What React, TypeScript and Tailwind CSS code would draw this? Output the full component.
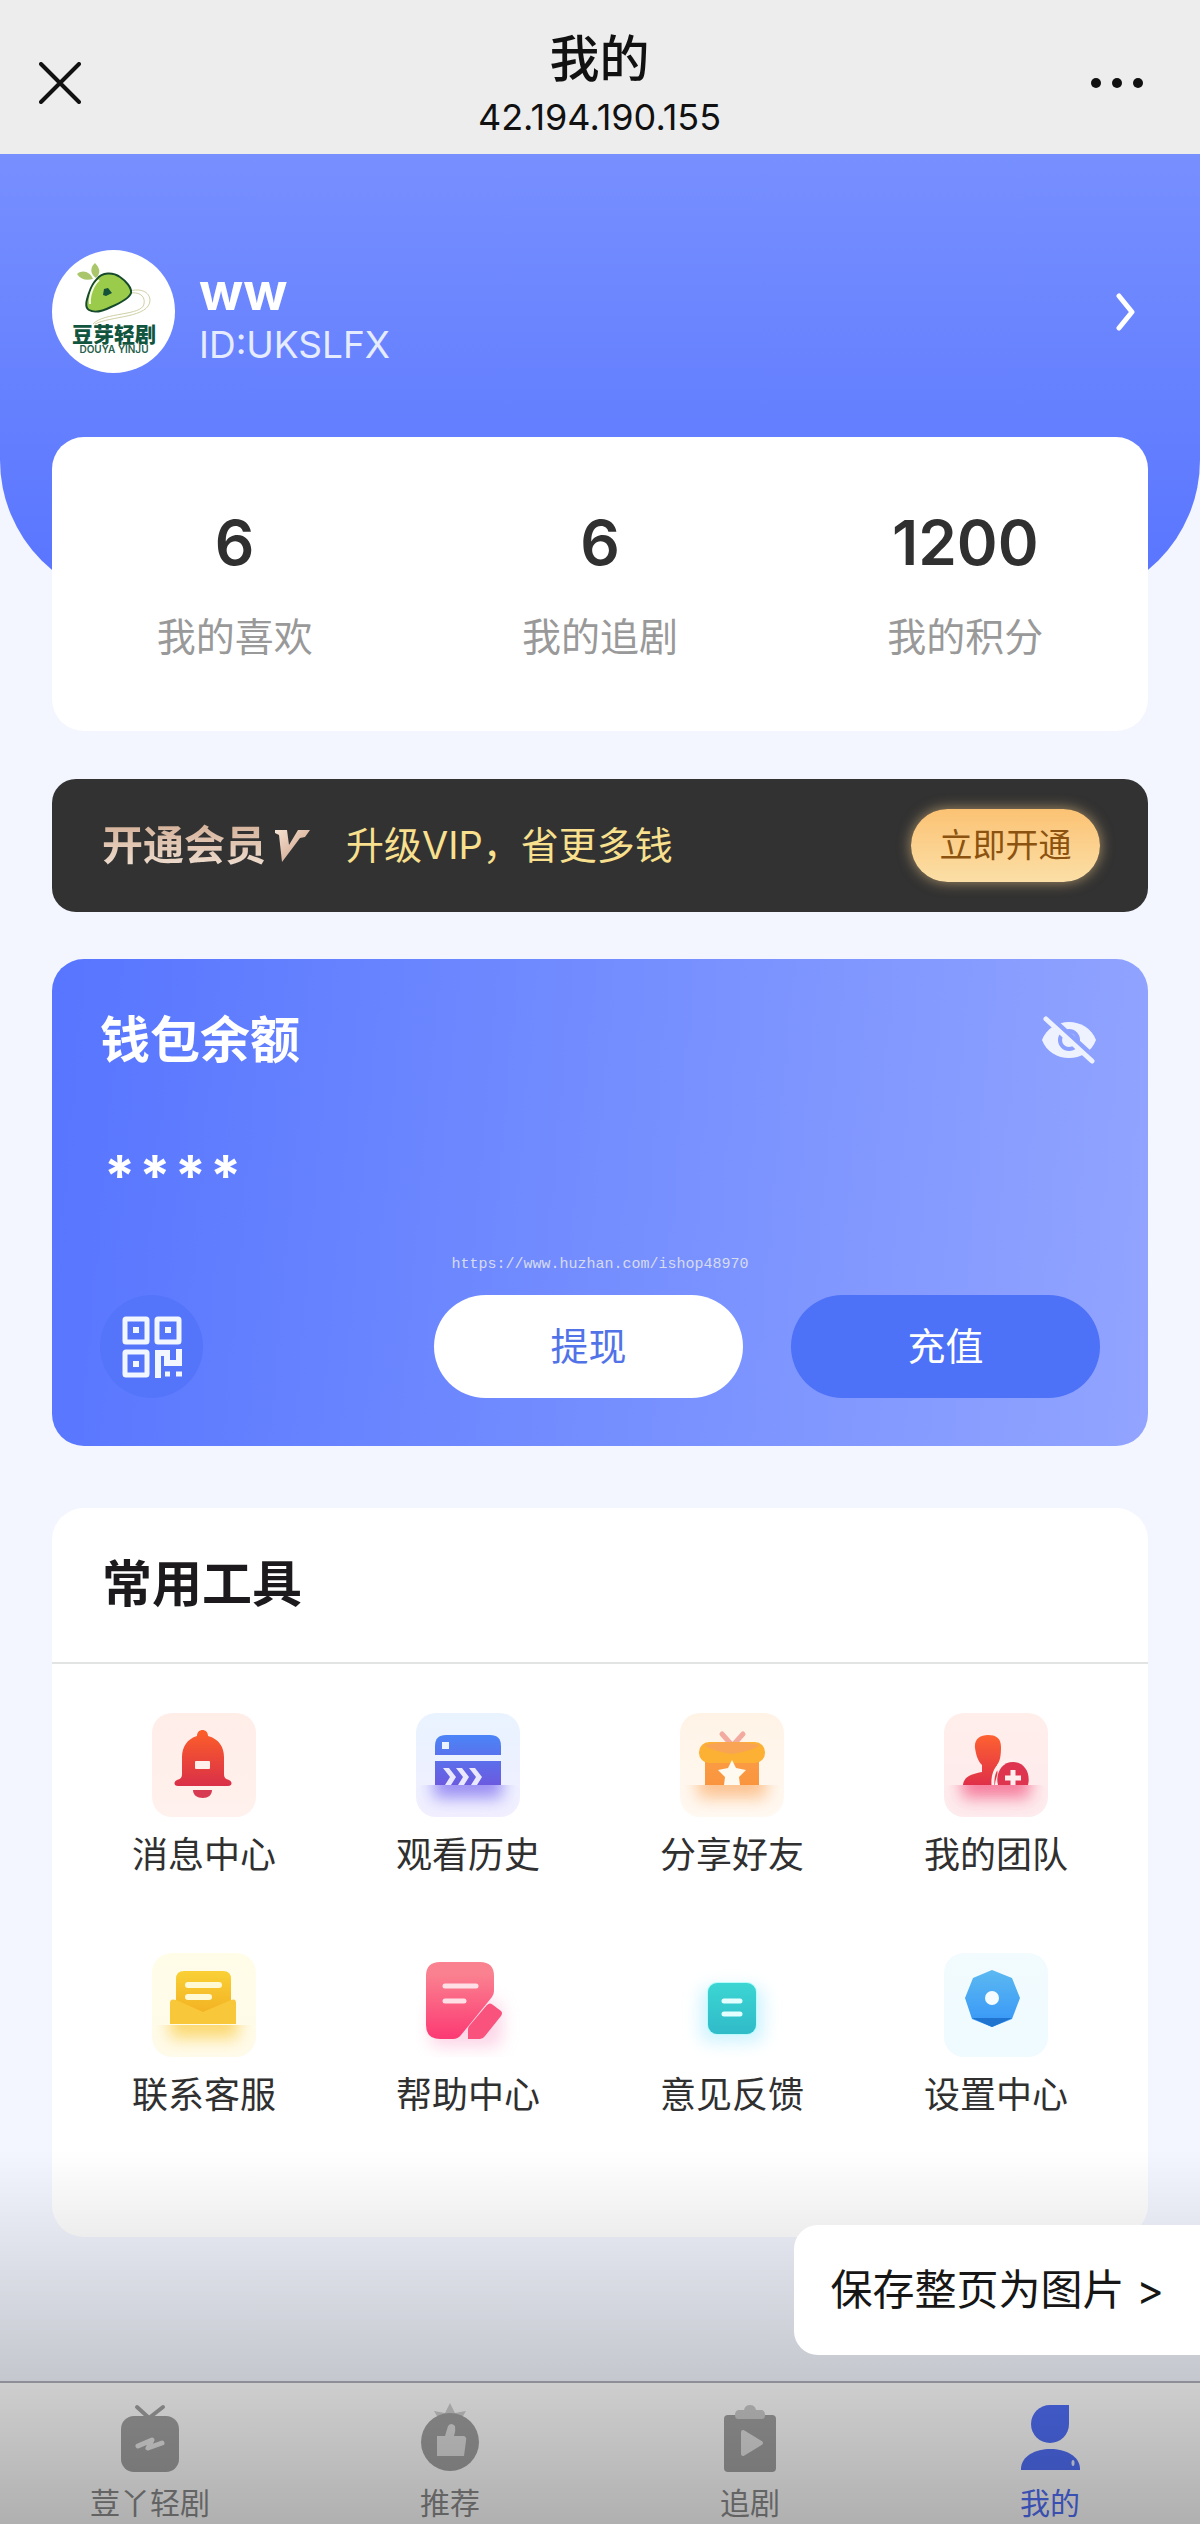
import type { ReactNode } from "react";

const stats = [
  { value: "6", label: "我的喜欢" },
  { value: "6", label: "我的追剧" },
  { value: "1200", label: "我的积分" },
];

function AvatarLogo() {
  return (
    <svg viewBox="0 0 123 123" className="w-[123px] h-[123px] shrink-0" aria-hidden="true">
      <circle cx="61.5" cy="61.5" r="61.5" fill="#fff" />
      <path d="M41 74C52 62 90 66 92 54C94 44 84 42 79 43M43 74C58 66 98 68 98 50C97 39 84 39 78 41" fill="none" stroke="#cfd0a4" />
      <path d="M25 24C31 19 38 22 41 29C34 31 28 29 25 24Z" fill="#a9c76a" />
      <path d="M43 13C37 18 39 25 44 28C49 23 48 18 43 13Z" fill="#a9c76a" />
      <path
        d="M45 29C50 22 61 22 68 27C74 31 80 38 79 43C77 49 66 54 59 57C51 61 42 63 37 60C32 57 35 49 37 43C39 37 41 33 45 29Z"
        fill="#9bcb4a"
        stroke="#164a2c"
        strokeWidth="2"
      />
      <path d="M38 54C37 46 41 35 47 30" fill="none" stroke="#f4fbe8" strokeWidth="2" />
      <path d="M52 39L56 38L60 43L54 46L51 45Z" fill="#14523a" />
      <text x="62" y="92" textAnchor="middle" fontSize="21" fontWeight="900" fill="#12553f">
        豆芽轻剧
      </text>
      <text x="62" y="103" textAnchor="middle" fontSize="10" fontWeight="600" fill="#25604c">
        DOUYA YINJU
      </text>
    </svg>
  );
}

function VipMark() {
  return (
    <svg viewBox="0 0 36 34" className="w-9 h-[34px] ml-2" aria-hidden="true">
      <defs>
        <linearGradient id="vip" x1="0" y1="0" x2="1" y2="1">
          <stop offset="0" stopColor="#f7e3d3" />
          <stop offset="1" stopColor="#c99a80" />
        </linearGradient>
      </defs>
      <path d="M1 1H13L15 16L24 1H36L31 8L26 9L8 33L5 6L1 4Z" fill="url(#vip)" />
    </svg>
  );
}

function EyeOffIcon() {
  return (
    <svg viewBox="0 0 54 48" className="w-[54px] h-12" aria-hidden="true">
      <defs>
        <mask id="eye">
          <rect width="54" height="48" fill="#fff" />
          <circle cx="27" cy="24" r="11" fill="#000" />
          <circle cx="27" cy="24" r="7" fill="#fff" />
          <path d="M6 -1L54 43" stroke="#000" strokeWidth="5" />
        </mask>
      </defs>
      <path d="M0 24C9 0 45 0 54 24C45 48 9 48 0 24Z" fill="#eef2ff" mask="url(#eye)" />
      <path d="M4 3L50 45" stroke="#eef2ff" strokeWidth="5" strokeLinecap="round" />
    </svg>
  );
}

function QrIcon() {
  return (
    <svg viewBox="0 0 60 62" className="w-[60px] h-[62px]" fill="none" stroke="#f2f6ff" strokeWidth="5" aria-hidden="true">
      <rect x="3" y="3" width="22" height="23" rx="1" />
      <rect x="35" y="3" width="22" height="23" rx="1" />
      <rect x="3" y="36" width="22" height="23" rx="1" />
      <path d="M11 14H17M43 14H49M11 48H17" strokeWidth="6" />
      <path d="M36 62V37H45V47H57V33" strokeWidth="6" />
      <path d="M43 58H48M54 58H60" />
    </svg>
  );
}

function ToolFrame({ id, from, to, glow, bg, children }: { id: string; from: string; to: string; glow?: string; bg?: [string, string]; children: ReactNode }) {
  return (
    <svg viewBox="0 0 104 104" className="w-[104px] h-[104px]" aria-hidden="true">
      <defs>
        <linearGradient id={`${id}-fill`} gradientUnits="userSpaceOnUse" x1="0" y1="20" x2="0" y2="84">
          <stop offset="0" stopColor={from} />
          <stop offset="1" stopColor={to} />
        </linearGradient>
        {bg && (
          <linearGradient id={`${id}-bg`} x1="0" y1="0" x2="0" y2="1">
            <stop offset="0" stopColor={bg[0]} />
            <stop offset="1" stopColor={bg[1]} />
          </linearGradient>
        )}
        <filter id={`${id}-blur`} x="-50%" y="-80%" width="200%" height="260%">
          <feGaussianBlur stdDeviation="8" />
        </filter>
        <clipPath id={`${id}-clip`}>
          <rect y="72" width="104" height="32" rx="6" />
        </clipPath>
      </defs>
      {bg && <rect width="104" height="104" rx="20" fill={`url(#${id}-bg)`} />}
      {glow && (
        <g clipPath={`url(#${id}-clip)`}>
          <rect x="18" y="56" width="68" height="29" fill={glow} opacity="0.7" filter={`url(#${id}-blur)`} />
        </g>
      )}
      {children}
    </svg>
  );
}

const tools = [
  {
    label: "消息中心",
    icon: (
      <ToolFrame id="bell" from="#fb5d2a" to="#d3264f" bg={["#ffede8", "#fff1ed"]}>
        <path
          d="M45 23C45 15 56 15 56 23C67 26 72 34 72 44V61C72 65 74 66 77 67C81 69 80 73 76 73H26C22 73 21 69 25 67C28 66 30 65 30 61V44C30 34 35 26 45 23Z"
          fill="url(#bell-fill)"
        />
        <path d="M41 77H60C60 82 56 85 51 85C45 85 41 82 41 77Z" fill="#d83a52" />
        <rect x="43" y="48" width="15" height="8" rx="1" fill="#fff0ec" />
      </ToolFrame>
    ),
  },
  {
    label: "观看历史",
    icon: (
      <ToolFrame id="history" from="#4a86f8" to="#7350da" glow="#7867ee" bg={["#e9f3ff", "#f1efff"]}>
        <path d="M19 42V33Q19 22 30 22H74Q85 22 85 33V42Z" fill="url(#history-fill)" />
        <rect x="19" y="48" width="66" height="24" fill="url(#history-fill)" />
        <rect x="26" y="29" width="7" height="7" fill="#eaf1ff" />
        <path d="M27 55H33L40 64L35 72H29L34 64ZM40 55H46L53 64L48 72H42L47 64ZM53 55H59L66 64L61 72H55L60 64Z" fill="#e9e8ff" />
      </ToolFrame>
    ),
  },
  {
    label: "分享好友",
    icon: (
      <ToolFrame id="gift" from="#fba44c" to="#f9913a" glow="#fbae6a" bg={["#fff3e6", "#fff9f2"]}>
        <path d="M42 21L51 31M63 21L54 31" stroke="#f3aa9f" strokeWidth="5" strokeLinecap="round" />
        <rect x="25" y="46" width="54" height="26" fill="url(#gift-fill)" />
        <rect x="19" y="29" width="66" height="21" rx="10" fill="#fcb034" />
        <path d="M24 32Q52 26 80 32Q72 38 52 41Q32 38 24 32Z" fill="#f7a063" opacity="0.7" />
        <path d="M52 47L56 55L66 57L59 64L60 72H44L45 64L38 57L48 55Z" fill="#fffaf0" />
      </ToolFrame>
    ),
  },
  {
    label: "我的团队",
    icon: (
      <ToolFrame id="team" from="#ff6430" to="#d8234e" glow="#f2507c" bg={["#ffeeea", "#fdebee"]}>
        <path
          d="M31 35C30 26 36 22 44 22C52 22 57 25 57 34C57 43 56 48 53 52V57C55 60 51 66 51 72H19C20 63 28 61 38 59V52C34 48 32 42 31 35Z"
          fill="url(#team-fill)"
        />
        <path d="M49 72C48 58 55 47 69 47" fill="none" stroke="#fff0ee" strokeWidth="3" />
        <path d="M54 72C51 60 58 49 69 49C80 49 87 60 84 72Z" fill="#de3450" />
        <path d="M69 57V72M61 65H77" stroke="#ffeef0" strokeWidth="5" />
      </ToolFrame>
    ),
  },
  {
    label: "联系客服",
    icon: (
      <ToolFrame id="mail" from="#f9cf35" to="#f0a018" glow="#f9c93c" bg={["#fffce8", "#fffbea"]}>
        <path d="M24 66V26Q24 18 32 18H71Q79 18 79 26V66Z" fill="url(#mail-fill)" />
        <path d="M18 71V50Q18 45 24 47L51 59L79 47Q84 45 84 50V71Z" fill="#f9c83a" />
        <path d="M36 32H67M36 44H57" stroke="#fff9d6" strokeWidth="6" strokeLinecap="round" />
      </ToolFrame>
    ),
  },
  {
    label: "帮助中心",
    icon: (
      <ToolFrame id="help" from="#fa8290" to="#fc3b74">
        <rect x="14" y="48" width="72" height="46" rx="10" fill="#fbc4dd" opacity="0.7" filter="url(#help-blur)" />
        <path d="M24 9H64Q78 9 78 23V38Q78 41 76 44L45 82Q42 86 37 86H24Q10 86 10 72V23Q10 9 24 9Z" fill="url(#help-fill)" />
        <path d="M71 52Q74 49 77 52L85 58Q87 60 85 63L69 83Q67 86 64 86H52V76Q52 74 54 72Z" fill="#f9527d" />
        <path d="M29 33H60M29 48H48" stroke="#ffdfe6" strokeWidth="5" strokeLinecap="round" />
      </ToolFrame>
    ),
  },
  {
    label: "意见反馈",
    icon: (
      <ToolFrame id="feedback" from="#3edbd5" to="#2fb9c8">
        <rect x="20" y="34" width="64" height="56" rx="10" fill="#bdefff" opacity="0.7" filter="url(#feedback-blur)" />
        <rect x="27" y="29" width="50" height="53" rx="10" fill="#b9fbfb" />
        <rect x="28" y="30" width="48" height="51" rx="9" fill="url(#feedback-fill)" />
        <path d="M44 48H60M44 61H60" stroke="#e4ffff" strokeWidth="5" strokeLinecap="round" />
      </ToolFrame>
    ),
  },
  {
    label: "设置中心",
    icon: (
      <ToolFrame id="settings" from="#5ab7f2" to="#2f8ff8" bg={["#f2fbfe", "#effbff"]}>
        <path d="M48 17L68 25L76 45L68 66L48 74L28 66L21 45L29 25Z" fill="url(#settings-fill)" />
        <path d="M28 65H68L48 74Z" fill="#1e74cf" />
        <circle cx="48" cy="45" r="7" fill="#f4fcff" />
      </ToolFrame>
    ),
  },
];

const tabs = [
  {
    label: "荳丫轻剧",
    active: false,
    icon: (
      <>
        <path d="M17 4L29 15L43 4" fill="none" stroke="currentColor" strokeWidth="4" strokeLinecap="round" />
        <rect x="1" y="13" width="58" height="56" rx="13" fill="currentColor" />
        <path d="M18 43L32 37L28 45L42 40" fill="none" stroke="#e8e8e8" strokeWidth="5" strokeLinecap="round" strokeLinejoin="round" />
      </>
    ),
  },
  {
    label: "推荐",
    active: false,
    icon: (
      <>
        <path d="M14 8L25 10L30 0L35 10L46 8L40 18H20Z" fill="#d0d0d0" />
        <circle cx="30" cy="39" r="29" fill="currentColor" />
        <path d="M17 33H25L28 23Q31 19 35 23Q36 28 34 33H44Q47 34 46 38L44 53H17Z" fill="#e0e0e0" />
      </>
    ),
  },
  {
    label: "追剧",
    active: false,
    icon: (
      <>
        <rect x="4" y="12" width="52" height="57" rx="4" fill="currentColor" />
        <path d="M18 7H24Q25 2 30 2Q35 2 36 7H42Q45 8 45 12Q45 16 42 16H18Q15 16 15 12Q15 8 18 7Z" fill="#cdcdcd" />
        <path d="M23 29L41 40L23 51Z" fill="#e2e2e2" stroke="#e2e2e2" strokeWidth="4" strokeLinejoin="round" />
      </>
    ),
  },
  {
    label: "我的",
    active: true,
    icon: (
      <>
        <path d="M30 2H49V21A19 19 0 1 1 30 2Z" fill="currentColor" />
        <path d="M1 67C0 39 61 39 60 67Z" fill="currentColor" />
        <ellipse cx="53" cy="60" rx="1.5" ry="3" fill="#e7edff" />
      </>
    ),
  },
];

export default function App() {
  return (
    <div className="relative flex min-h-screen flex-col bg-[#f3f6ff] font-['Inter','Noto_Sans_CJK_SC',sans-serif] text-[#303030]">
      <header className="grid h-[154px] grid-cols-[1fr_auto_1fr] items-center bg-[#ededed] pr-14 pl-[39px] text-[#111]">
        <button type="button" aria-label="关闭" className="justify-self-start pt-3">
          <svg viewBox="0 0 42 42" className="h-[42px] w-[42px]" stroke="currentColor" strokeWidth="4" strokeLinecap="round">
            <path d="M2 2L40 40M40 2L2 40" />
          </svg>
        </button>
        <div className="pt-4 pl-4 text-center">
          <h1 className="text-[50px] leading-[64px] font-medium">我的</h1>
          <p className="text-[36px] leading-[52px]">42.194.190.155</p>
        </div>
        <button type="button" aria-label="更多" className="justify-self-end pt-3">
          <svg viewBox="0 0 54 12" className="h-3 w-[54px]" fill="currentColor">
            <circle cx="6" cy="6" r="5" />
            <circle cx="27" cy="6" r="5" />
            <circle cx="48" cy="6" r="5" />
          </svg>
        </button>
      </header>

      <section className="rounded-b-[142px] bg-linear-to-b from-[#778fff] to-[#5874ff] px-[52px] pt-24 pb-[229px] text-white">
        <a href="#profile" className="flex items-center">
          <AvatarLogo />
          <div className="ml-6 flex-1 pt-2">
            <p className="text-[52px] leading-[58px] font-bold">ww</p>
            <p className="text-[37px] leading-[48px] text-[#e6ecff]">ID:UKSLFX</p>
          </div>
          <svg viewBox="0 0 20 38" className="mr-3 h-[38px] w-5" fill="none" stroke="currentColor" strokeWidth="5" strokeLinecap="round" strokeLinejoin="round" aria-hidden="true">
            <path d="M3 3L16 19L3 35" />
          </svg>
        </a>
      </section>

      <main className="-mt-[165px] px-[52px] pb-36">
        {/* Stats */}
        <section className="grid grid-cols-3 rounded-[32px] bg-white pt-[70px] pb-[68px] text-center">
          {stats.map((s) => (
            <div key={s.label}>
              <p className="text-[62px] leading-[72px] font-semibold">{s.value}</p>
              <p className="mt-8 text-[39px] leading-[52px] text-[#999]">{s.label}</p>
            </div>
          ))}
        </section>

        {/* VIP banner */}
        <section className="mt-12 flex h-[133px] items-center rounded-3xl bg-[#323232] pr-12 pl-[50px]">
          <p className="bg-linear-to-b from-[#cfa98f] to-[#f3e6da] bg-clip-text text-[41px] font-bold text-transparent">开通会员</p>
          <VipMark />
          <p className="ml-9 flex-1 text-[38px] text-[#f8e08e]">升级VIP，省更多钱</p>
          <button
            type="button"
            className="h-[73px] w-[189px] rounded-full bg-linear-to-b from-[#fbc273] to-[#fbdfa6] text-[33px] text-[#8c5310] shadow-[0_0_14px_rgba(251,210,140,0.6)]"
          >
            立即开通
          </button>
        </section>

        {/* Wallet */}
        <section className="relative mt-[47px] rounded-[32px] bg-linear-95 from-[#5775ff] to-[#92a4ff] px-12 pt-12 pb-12 text-white">
          <div className="flex items-center justify-between pr-1">
            <h2 className="text-[50px] leading-[66px] font-bold">钱包余额</h2>
            <button type="button" aria-label="显示余额">
              <EyeOffIcon />
            </button>
          </div>
          <p className="mt-[62px] flex h-[62px] items-center gap-1 pt-5 pl-1 text-[56px] leading-[62px] font-bold">
            <span>*</span>
            <span>*</span>
            <span>*</span>
            <span>*</span>
          </p>
          <p className="absolute inset-x-0 top-[294px] text-center font-['Liberation_Mono',monospace] text-[15px] leading-6 text-[#d6dbef]">
            https://www.huzhan.com/ishop48970
          </p>
          <div className="mt-[98px] flex items-center gap-12">
            <button type="button" aria-label="二维码" className="mr-auto flex h-[103px] w-[103px] items-center justify-center rounded-full bg-[#5474fa]">
              <QrIcon />
            </button>
            <button type="button" className="h-[103px] w-[309px] rounded-full bg-white text-[38px] text-[#5272e8]">
              提现
            </button>
            <button type="button" className="h-[103px] w-[309px] rounded-full bg-[#4d71f7] text-[38px] text-white">
              充值
            </button>
          </div>
        </section>

        {/* Tools */}
        <section className="mt-[62px] rounded-[32px] bg-white pb-[120px]">
          <h2 className="border-b-2 border-[#e2e4e4] px-[50px] pt-11 pb-[46px] text-[50px] leading-[64px] font-bold text-[#1c1a1c]">常用工具</h2>
          <div className="grid grid-cols-4 gap-y-[76px] px-5 pt-[49px]">
            {tools.map((t) => (
              <a key={t.label} href="#tool" className="flex flex-col items-center">
                {t.icon}
                <span className="mt-4 text-[36px] leading-[44px]">{t.label}</span>
              </a>
            ))}
          </div>
        </section>
      </main>

      <nav className="mt-auto grid h-[143px] grid-cols-4 border-t-2 border-[#aeb0bb] bg-white pt-5">
        {tabs.map((t) => (
          <a key={t.label} href="#tab" className={t.active ? "flex flex-col items-center text-[#5170fa]" : "flex flex-col items-center text-[#a3a3a3]"}>
            <svg viewBox="0 0 60 70" className="h-[70px] w-[60px]" aria-hidden="true">
              {t.icon}
            </svg>
            <span className={t.active ? "mt-2 text-[30px] leading-[44px]" : "mt-2 text-[30px] leading-[44px] text-[#8c8c8c]"}>{t.label}</span>
          </a>
        ))}
      </nav>

      <div className="pointer-events-none absolute inset-x-0 bottom-0 h-[374px] bg-linear-to-t from-black/31 to-transparent" />

      <button type="button" className="absolute right-0 bottom-[169px] rounded-l-3xl bg-white py-[37px] pr-9 pl-9 text-[42px] leading-[56px] text-[#161616]">
        保存整页为图片 &gt;
      </button>
    </div>
  );
}
